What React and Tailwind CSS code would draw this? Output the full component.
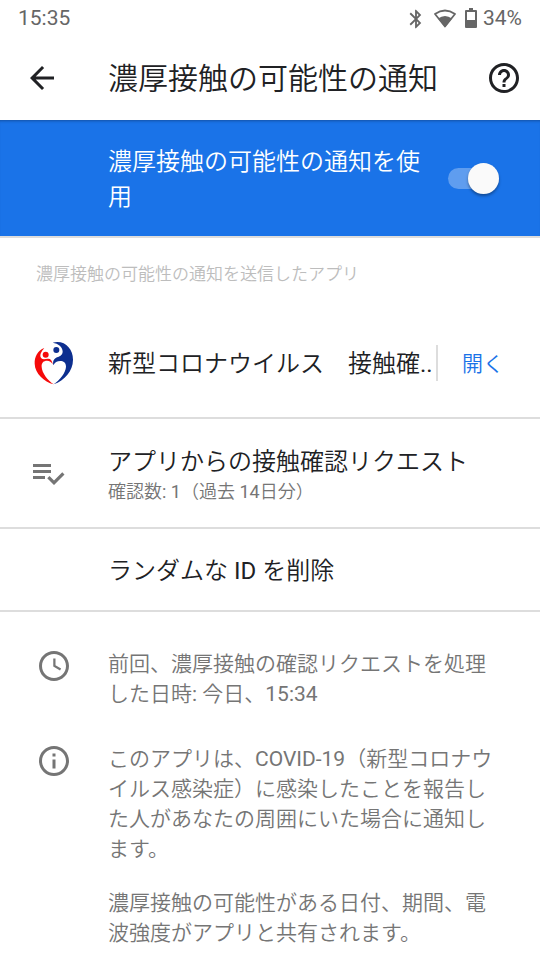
import { useState } from 'react';

const ICONS = {
    back: 'M20 11H7.83l5.59-5.59L12 4l-8 8 8 8 1.41-1.41L7.83 13H20v-2z',
    help: 'M11 18h2v-2h-2v2zm1-16C6.48 2 2 6.48 2 12s4.48 10 10 10 10-4.48 10-10S17.52 2 12 2zm0 18c-4.41 0-8-3.59-8-8s3.59-8 8-8 8 3.59 8 8-3.59 8-8 8zm0-14c-2.21 0-4 1.79-4 4h2c0-1.1.9-2 2-2s2 .9 2 2c0 2-3 1.75-3 5h2c0-2.25 3-2.5 3-5 0-2.21-1.79-4-4-4z',
    playlistCheck: 'M14 10H2v2h12v-2zm0-4H2v2h12V6zM2 16h8v-2H2v2zm19.5-4.5L23 13l-6.99 7-4.51-4.5L13 14l3.01 3 5.49-5.5z',
    clock: 'M11.99 2C6.47 2 2 6.48 2 12s4.47 10 9.99 10C17.52 22 22 17.52 22 12S17.52 2 11.99 2zM12 20c-4.42 0-8-3.58-8-8s3.58-8 8-8 8 3.58 8 8-3.58 8-8 8zm-.5-13v5.25l4.5 2.67.75-1.23-3.75-2.22V7z',
    info: 'M11 7h2v2h-2zm0 4h2v6h-2zm1-9C6.48 2 2 6.48 2 12s4.48 10 10 10 10-4.48 10-10S17.52 2 12 2zm0 18c-4.41 0-8-3.59-8-8s3.59-8 8-8 8 3.59 8 8-3.59 8-8 8z',
    bluetooth: 'M17.71 7.71L12 2h-1v7.59L6.41 5 5 6.41 10.59 12 5 17.59 6.41 19 11 14.41V22h1l5.71-5.71-4.3-4.29 4.3-4.29zM13 5.83l1.88 1.88L13 9.59V5.83zm1.88 10.46L13 18.17v-3.76l1.88 1.88z',
};

function Icon({ name, className = 'size-9' }) {
    return (
        <svg className={`shrink-0 ${className}`} viewBox="0 0 24 24" fill="currentColor" aria-hidden="true">
            <path d={ICONS[name]} />
        </svg>
    );
}

function WifiIcon() {
    return (
        <svg className="h-5 w-6 shrink-0" viewBox="0 0 24 20" aria-hidden="true">
            <path d="M2 5Q12-2 22 5L12 17.500z" fill="none" stroke="currentColor" strokeWidth="1.8" strokeLinejoin="round" />
            <path d="M5 9.500Q12 4.500 19 9.500L12 18z" fill="currentColor" />
        </svg>
    );
}

function BatteryIcon() {
    return (
        <svg className="h-5 w-3 shrink-0" viewBox="0 0 12 20" fill="currentColor" aria-hidden="true">
            <path fillRule="evenodd" d="M4 0h4v2h3a1 1 0 0 1 1 1v16a1 1 0 0 1-1 1H1a1 1 0 0 1-1-1V3a1 1 0 0 1 1-1h3zM2 4v8h8V4z" />
        </svg>
    );
}

function AppLogo() {
    return (
        <svg className="h-11 w-10 shrink-0" viewBox="43 48 120 132" aria-hidden="true">
            <g fill="#f50a0a">
                <circle cx="78" cy="89" r="9" />
                <path d="M74 69C54 76 44 96 45 116C46 146 73 170 102 178C84 166 67 144 66 126C65 113 72 107 82 107C90 107 95 111 99 118C98 106 92 100 84 101C74 103 66 104 63 97C60 88 66 78 74 69z" />
            </g>
            <g fill="#0d2f8f">
                <circle cx="110" cy="75" r="9" />
                <path d="M99 53C134 44 160 70 160 104C160 138 135 166 102 178C122 163 138 143 139 125C139 113 131 108 122 108C112 108 105 112 101 121C98 109 103 101 112 97C121 93 128 91 129 80C129 66 116 55 99 53z" />
            </g>
        </svg>
    );
}

function StatusBar() {
    return (
        <div className="flex h-9 items-center px-[18px] pt-px text-[21px] text-[#666666]">
            <span>15:35</span>
            <div className="ml-auto flex items-center">
                <Icon name="bluetooth" className="mr-1.5 size-[22px]" />
                <WifiIcon />
                <span className="ml-2 mr-1.5 flex pb-0.5">
                    <BatteryIcon />
                </span>
                <span>34%</span>
            </div>
        </div>
    );
}

function InfoItem({ icon, children }) {
    return (
        <div className="flex items-start gap-9 px-9">
            <Icon name={icon} />
            <div className="flex min-w-0 flex-1 flex-col gap-6 pt-px text-[21px] leading-[30px]">{children}</div>
        </div>
    );
}

function App() {
    const [enabled, setEnabled] = useState(true);

    return (
        <div
            lang="ja"
            className="min-h-screen bg-white font-['Roboto','Noto_Sans_CJK_JP_DemiLight','Noto_Sans_CJK_JP',sans-serif] text-[#202124]"
        >
            <StatusBar />

            <header className="flex h-[84px] items-center px-6 pr-[18px]">
                <button type="button" aria-label="戻る" className="flex">
                    <Icon name="back" />
                </button>
                <h1 className="ml-12 flex-1 pt-0.5 text-3xl">濃厚接触の可能性の通知</h1>
                <button type="button" aria-label="ヘルプ" className="flex">
                    <Icon name="help" />
                </button>
            </header>

            <main>
                <div className="flex min-h-[118px] items-center gap-6 border-b-2 border-[#dddddd] bg-[#1a73e8] bg-clip-padding pl-[108px] pr-[41px] text-white inset-shadow-[0_3px_3px_-2px_rgba(0,0,0,0.3)]">
                    <label htmlFor="exposure" className="flex-1 pt-1 text-2xl leading-[35px]">
                        濃厚接触の可能性の通知を使用
                    </label>
                    <input
                        id="exposure"
                        type="checkbox"
                        role="switch"
                        checked={enabled}
                        onChange={(e) => setEnabled(e.target.checked)}
                        className="flex h-[21px] w-[51px] shrink-0 appearance-none items-center rounded-full bg-white/30 before:size-[31px] before:shrink-0 before:rounded-full before:bg-[#fafafa] before:shadow-[0_2px_3px_rgba(0,0,0,0.35)] checked:justify-end"
                    />
                </div>

                <section className="border-b-2 border-[#dddddd]">
                    <h2 className="flex h-[71px] items-center px-9 pt-0.5 text-[17px] text-[#bdbdbd]">
                        濃厚接触の可能性の通知を送信したアプリ
                    </h2>
                    <div className="flex h-[108px] items-center pl-[34px] pr-9">
                        <AppLogo />
                        <span className="ml-[34px] flex-1 overflow-hidden whitespace-nowrap pt-0.5 text-2xl">
                            新型コロナウイルス　接触確..
                        </span>
                        <button
                            type="button"
                            className="h-9 border-l-2 border-[#dddddd] pl-6 pt-1 text-[21px] text-[#1a73e8]"
                        >
                            開く
                        </button>
                    </div>
                </section>

                <button
                    type="button"
                    className="flex h-[110px] w-full items-center gap-[42px] border-b-2 border-[#dddddd] pl-[30px] pr-9 text-left"
                >
                    <span className="text-[#757575]">
                        <Icon name="playlistCheck" />
                    </span>
                    <span className="flex flex-col pt-1.5">
                        <span className="text-2xl">アプリからの接触確認リクエスト</span>
                        <span className="text-lg leading-7 text-[#757575]">確認数: 1（過去 14日分）</span>
                    </span>
                </button>

                <button
                    type="button"
                    className="flex h-[83px] w-full items-center border-b-2 border-[#dddddd] pl-[108px] pr-9 pt-0.5 text-left text-2xl"
                >
                    ランダムな ID を削除
                </button>

                <section className="flex flex-col gap-[34px] pb-3 pt-9 text-[#757575]">
                    <InfoItem icon="clock">
                        <p>前回、濃厚接触の確認リクエストを処理した日時: 今日、15:34</p>
                    </InfoItem>
                    <InfoItem icon="info">
                        <p>このアプリは、COVID-19（新型コロナウイルス感染症）に感染したことを報告した人があなたの周囲にいた場合に通知します。</p>
                        <p>濃厚接触の可能性がある日付、期間、電波強度がアプリと共有されます。</p>
                    </InfoItem>
                </section>
            </main>
        </div>
    );
}

export default App;
